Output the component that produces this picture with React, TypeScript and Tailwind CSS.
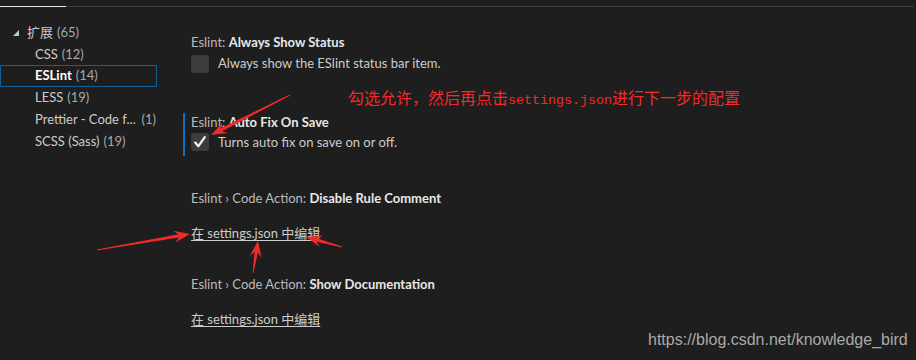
import React from "react";

const UI = { fontFamily: 'Lato, "Noto Sans CJK SC", sans-serif' };

function arrowPts(x1: number, y1: number, x2: number, y2: number) {
  const dx = x2 - x1, dy = y2 - y1;
  const L = Math.hypot(dx, dy);
  const ux = dx / L, uy = dy / L;
  const nx = -uy, ny = ux;
  const hl = 16, hw = 6, sw = 1.7, tw = 0.4;
  const nk = [x2 - ux * hl * 0.72, y2 - uy * hl * 0.72];
  const bs = [x2 - ux * hl, y2 - uy * hl];
  const p = (x: number, y: number) => `${x.toFixed(1)},${y.toFixed(1)}`;
  return [
    p(x1 + nx * tw, y1 + ny * tw),
    p(nk[0] + nx * sw, nk[1] + ny * sw),
    p(bs[0] + nx * hw, bs[1] + ny * hw),
    p(x2, y2),
    p(bs[0] - nx * hw, bs[1] - ny * hw),
    p(nk[0] - nx * sw, nk[1] - ny * sw),
    p(x1 - nx * tw, y1 - ny * tw),
  ].join(" ");
}

function Checkbox({ checked }: { checked?: boolean }) {
  return (
    <div className="w-[18px] h-[18px] rounded-[3px] bg-[#3c3c3c] flex items-center justify-center shrink-0">
      {checked && (
        <svg width="14" height="14" viewBox="0 0 14 14">
          <path d="M2.2 7.6 L5.4 11.2 L11.8 2.2" fill="none" stroke="#f2f2f2" strokeWidth="2.3" strokeLinecap="round" strokeLinejoin="round" />
        </svg>
      )}
    </div>
  );
}

function Title({ cat, name }: { cat: string; name: string }) {
  return (
    <div className="h-[18px] leading-[18px] whitespace-nowrap">
      <span className="text-[#bbbbbb]">{cat}</span>
      <span className="font-bold text-[#e7e7e7]">{name}</span>
    </div>
  );
}

function EditLink() {
  return (
    <div className="h-[18px] leading-[18px] text-[#cccccc] underline underline-offset-[2px] whitespace-nowrap">
      在 settings.json 中编辑
    </div>
  );
}

export default function App() {
  const arrows = [
    [290, 95, 211, 135],
    [97, 250, 190, 234],
    [253, 273, 258, 241],
    [342, 247, 306, 237],
  ];
  return (
    <div className="relative w-[916px] h-[360px] bg-[#1e1e1e] overflow-hidden text-[13px]" style={UI}>
      <div className="flex mt-[6px] h-px">
        <div className="w-[66px] bg-[#e8e8e8]" />
        <div className="flex-1 bg-[#3c3c3c] mr-[2px]" />
      </div>
      <div className="flex">
        <div className="w-[157px] pt-[15px] shrink-0">
          <div className="h-[22px] flex items-center pl-[13px]">
            <svg width="6" height="6" viewBox="0 0 6 6" className="mr-[8px]">
              <polygon points="6,0 6,6 0,6" fill="#c5c5c5" />
            </svg>
            <span className="text-[#cccccc]">扩展</span>
            <span className="ml-[4px] text-[#a8a8a8]">(65)</span>
          </div>
          <div className="h-[22px] flex items-center pl-[35px] text-[#cccccc]">
            CSS<span className="ml-[4px] text-[#a8a8a8]">(12)</span>
          </div>
          <div className="h-[22px] flex items-center pl-[34px] border border-[#0e639c] -mt-px mb-px">
            <span className="font-bold text-white">ESLint</span>
            <span className="ml-[4px] text-[#a8a8a8]">(14)</span>
          </div>
          <div className="h-[22px] flex items-center pl-[35px] text-[#cccccc] -mt-px">
            LESS<span className="ml-[4px] text-[#a8a8a8]">(19)</span>
          </div>
          <div className="h-[22px] flex items-center pl-[35px] pr-[1px] text-[#cccccc]">
            <span className="whitespace-nowrap">Prettier - Code f...</span>
            <span className="ml-auto text-[#a8a8a8]">(1)</span>
          </div>
          <div className="h-[22px] flex items-center pl-[35px] text-[#cccccc]">
            SCSS (Sass)<span className="ml-[4px] text-[#a8a8a8]">(19)</span>
          </div>
        </div>

        <div className="pl-[26px] pt-[26px] flex flex-col">
          <div className="pl-[8px]">
            <Title cat="Eslint: " name="Always Show Status" />
            <div className="mt-[3px] flex items-center gap-[9px]">
              <Checkbox />
              <span className="text-[#cccccc] whitespace-nowrap">Always show the ESlint status bar item.</span>
            </div>
          </div>

          <div className="mt-[39px] border-l-2 border-[#0e70c0] pl-[6px] pb-[4px]">
            <Title cat="Eslint: " name="Auto Fix On Save" />
            <div className="mt-[2px] flex items-center gap-[9px]">
              <Checkbox checked />
              <span className="text-[#cccccc] whitespace-nowrap">Turns auto fix on save on or off.</span>
            </div>
          </div>

          <div className="mt-[33px] pl-[8px]">
            <Title cat="Eslint › Code Action: " name="Disable Rule Comment" />
            <div className="mt-[17px]">
              <EditLink />
            </div>
          </div>

          <div className="mt-[33px] pl-[8px]">
            <Title cat="Eslint › Code Action: " name="Show Documentation" />
            <div className="mt-[17px]">
              <EditLink />
            </div>
          </div>
        </div>
      </div>

      <div
        className="absolute left-[348px] top-[86px] text-[16px] leading-[22px] text-[#f22a2a] whitespace-nowrap"
        style={{ fontFamily: '"Noto Sans CJK SC", sans-serif' }}
      >
        勾选允许，然后再点击
        <span className="text-[13.33px]" style={{ fontFamily: '"Liberation Mono", monospace' }}>
          settings.json
        </span>
        进行下一步的配置
      </div>

      <div
        className="absolute left-[648px] top-[330px] text-[16px] leading-[20px] text-[#a9a9a9] whitespace-nowrap"
        style={{ fontFamily: '"Liberation Sans", Arial, sans-serif' }}
      >
        https://blog.csdn.net/knowledge_bird
      </div>

      <svg className="absolute inset-0 pointer-events-none" width="916" height="360">
        {arrows.map((a, i) => (
          <polygon key={i} points={arrowPts(a[0], a[1], a[2], a[3])} fill="#ee2b2b" />
        ))}
      </svg>
    </div>
  );
}
